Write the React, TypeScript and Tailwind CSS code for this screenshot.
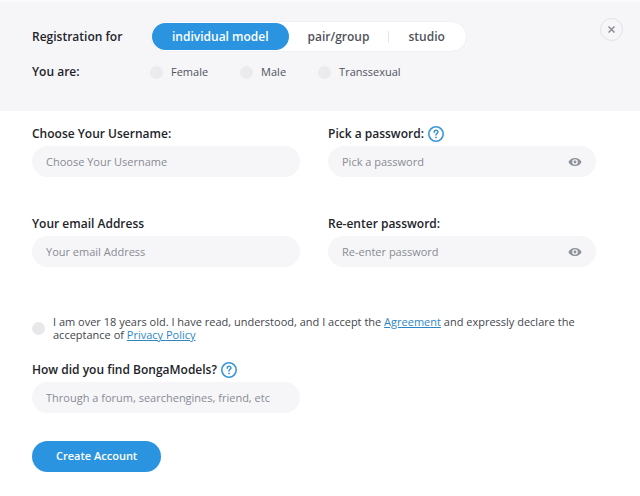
import React, { useState } from "react";

const kinds = ["individual model", "pair/group", "studio"];
const genders = ["Female", "Male", "Transsexual"];

function HelpButton({ label }: { label: string }) {
  return (
    <button type="button" aria-label={label} className="size-4 shrink-0 text-[#3a97d6]">
      <svg viewBox="0 0 16 16" className="size-4" fill="none" stroke="currentColor" strokeLinecap="round">
        <circle cx="8" cy="8" r="7.2" strokeWidth="1.6" />
        <path d="M6.200 6.200c0-2.500 3.800-2.400 3.800-.2 0 1.400-2 1.500-2 3" strokeWidth="1.500" />
        <path d="M8 11.300v.1" strokeWidth="1.700" />
      </svg>
    </button>
  );
}

function EyeIcon() {
  return (
    <svg viewBox="0 0 14 10" className="h-[10px] w-[14px]">
      <path
        fill="currentColor"
        fillRule="evenodd"
        d="M7 .9C3.800.9 1.400 2.700.4 5 1.400 7.300 3.800 9.100 7 9.100S12.600 7.300 13.600 5C12.600 2.700 10.200.9 7 .9Zm0 1.300a2.800 2.800 0 1 1 0 5.600 2.800 2.800 0 0 1 0-5.600Zm0 1.400a1.400 1.400 0 1 0 0 2.800 1.400 1.400 0 0 0 0-2.800Z"
      />
    </svg>
  );
}

type FieldProps = {
  id: string;
  label: string;
  placeholder: string;
  type?: string;
  help?: string;
};

function Field({ id, label, placeholder, type = "text", help }: FieldProps) {
  const [shown, setShown] = useState(false);
  const secret = type === "password";
  return (
    <div>
      <div className="flex h-6 items-center gap-1">
        <label htmlFor={id} className="text-xs font-semibold text-[#22242a]">
          {label}
        </label>
        {help && <HelpButton label={help} />}
      </div>
      <div className="flex h-[31px] items-center rounded-full bg-[#f6f6f9] px-[14px]">
        <input
          id={id}
          type={secret && shown ? "text" : type}
          placeholder={placeholder}
          className="h-full min-w-0 flex-1 bg-transparent text-[11px] font-medium text-[#5d6068] outline-none placeholder:text-[#888b93]"
        />
        {secret && (
          <button
            type="button"
            aria-label="Show password"
            onClick={() => setShown(!shown)}
            className="text-[#8f9299]"
          >
            <EyeIcon />
          </button>
        )}
      </div>
    </div>
  );
}

export default function App() {
  const [kind, setKind] = useState(0);
  return (
    <form className="bg-white font-['Open_Sans',sans-serif]" onSubmit={(e) => e.preventDefault()}>
      <header className="flex items-start justify-between border-t-2 border-[#fafafc] bg-[#f6f6f9] pt-4 pr-[17px] pb-[31px] pl-8">
        <div className="grid grid-cols-[118px_auto] items-center gap-y-3 pt-[3px]">
          <span className="text-xs font-semibold text-[#22242a]">Registration for</span>
          <div className="flex h-[31px] items-center rounded-full border border-[#f0f0f3] bg-white pr-0.5 pl-px">
            {kinds.map((name, i) => (
              <React.Fragment key={name}>
                {i === 2 && <span className="h-3 w-px bg-[#e6e6ea]" />}
                <button
                  type="button"
                  aria-pressed={kind === i}
                  onClick={() => setKind(i)}
                  className={
                    kind === i
                      ? "h-[27px] rounded-full bg-[#2a94e0] px-5 text-xs font-semibold text-white"
                      : "h-[27px] px-[19px] text-xs font-semibold text-[#50535b]"
                  }
                >
                  {name}
                </button>
              </React.Fragment>
            ))}
          </div>
          <span className="text-xs font-semibold text-[#22242a]">You are:</span>
          <div className="flex gap-8">
            {genders.map((name) => (
              <label key={name} className="flex h-4 items-center gap-2 text-[11px] font-medium text-[#50535b]">
                <input
                  type="radio"
                  name="gender"
                  className="size-[13px] appearance-none rounded-full bg-[#ebebed] checked:bg-[#2a94e0]"
                />
                {name}
              </label>
            ))}
          </div>
        </div>
        <button
          type="button"
          aria-label="Close"
          className="flex size-[23px] items-center justify-center rounded-full border border-[#e2e2e6] text-[#8b8e96]"
        >
          <svg viewBox="0 0 7 7" className="size-[7px]" stroke="currentColor" strokeWidth="1.500">
            <path d="M.5.5l6 6M6.500.5l-6 6" />
          </svg>
        </button>
      </header>

      <main className="pt-[11px] pr-11 pb-6 pl-8">
        <div className="grid grid-cols-2 gap-x-7 gap-y-[35px]">
          <Field id="username" label="Choose Your Username:" placeholder="Choose Your Username" />
          <Field id="password" label="Pick a password:" placeholder="Pick a password" type="password" help="Password help" />
          <Field id="email" label="Your email Address" placeholder="Your email Address" type="email" />
          <Field id="password2" label="Re-enter password:" placeholder="Re-enter password" type="password" />
        </div>

        <div className="mt-12 mb-[17px] flex items-center gap-2">
          <input
            id="terms"
            type="checkbox"
            className="size-[13px] shrink-0 appearance-none rounded-full bg-[#e8e8eb] checked:bg-[#2a94e0]"
          />
          <label htmlFor="terms" className="text-[11px] leading-[13px] font-medium text-[#43464d]">
            I am over 18 years old. I have read, understood, and I accept the{" "}
            <a href="#agreement" className="text-[#2f86c4] underline">
              Agreement
            </a>{" "}
            and expressly declare the acceptance of{" "}
            <a href="#privacy" className="text-[#2f86c4] underline">
              Privacy Policy
            </a>
          </label>
        </div>

        <div className="grid grid-cols-2 gap-x-7">
          <Field
            id="source"
            label="How did you find BongaModels?"
            placeholder="Through a forum, searchengines, friend, etc"
            help="Source help"
          />
        </div>

        <button type="submit" className="mt-7 h-[31px] rounded-full bg-[#2a94e0] px-6 text-[11px] font-semibold text-white">
          Create Account
        </button>
      </main>
    </form>
  );
}
